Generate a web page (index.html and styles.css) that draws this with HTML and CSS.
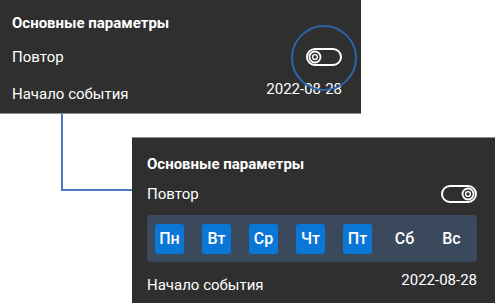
FILE: index.html
```html
<!DOCTYPE html>
<html>
<head>
    <title>Повтор события</title>
    <link rel="stylesheet" href="styles.css">
</head>
<body>
    <div class="panel panel_small">
        <p class="titre">Основные параметры</p>
        <div class="ligne ligne_toggle">
            <span>Повтор</span>
            <span class="toggle_wrap">
                <svg class="toggle" viewBox="0 0 36 18" width="36" height="18">
                    <rect x="1" y="1" width="34" height="16" rx="8" fill="none" stroke="#fff" stroke-width="2"/>
                    <circle cx="9" cy="9" r="5.5" fill="none" stroke="#fff" stroke-width="1.8"/>
                    <circle cx="9" cy="9" r="2.4" fill="none" stroke="#fff" stroke-width="1.4"/>
                </svg>
                <span class="cercle"></span>
            </span>
        </div>
        <div class="ligne ligne_date">
            <span>Начало события</span>
            <span class="date">2022-08-28</span>
        </div>
    </div>

    <!-- trait de liaison -->
    <svg class="liaison" width="140" height="200" viewBox="0 0 140 200">
        <polyline points="62,114 62,190 132,190" fill="none" stroke="#4d76c6" stroke-width="2"/>
    </svg>

    <div class="panel panel_grand">
        <p class="titre">Основные параметры</p>
        <div class="ligne ligne_toggle">
            <span>Повтор</span>
            <svg class="toggle" viewBox="0 0 36 18" width="36" height="18">
                <rect x="1" y="1" width="34" height="16" rx="8" fill="none" stroke="#fff" stroke-width="2"/>
                <circle cx="27" cy="9" r="5.5" fill="none" stroke="#fff" stroke-width="1.8"/>
                <circle cx="27" cy="9" r="2.4" fill="none" stroke="#fff" stroke-width="1.4"/>
            </svg>
        </div>
        <div class="jours">
            <span class="jour actif">Пн</span>
            <span class="jour actif">Вт</span>
            <span class="jour actif">Ср</span>
            <span class="jour actif">Чт</span>
            <span class="jour actif">Пт</span>
            <span class="jour">Сб</span>
            <span class="jour">Вс</span>
        </div>
        <div class="ligne ligne_date">
            <span>Начало события</span>
            <span class="date">2022-08-28</span>
        </div>
    </div>
</body>
</html>
```

FILE: styles.css
```css
body {
    margin: 0;
    background-color: #fff;
    font-family: Roboto, "Noto Sans", sans-serif;
    font-size: 15px;
    color: #fff;
    position: relative;
    height: 303px;
    overflow: hidden;
}
.panel {
    background-color: #2f2f2f;
    box-sizing: border-box;
}
.panel_small {
    width: 361px;
    height: 114px;
    padding: 13px 19px 0 12px;
    border-bottom: 1px solid #8a8a8a;
}
.panel_grand {
    width: 363px;
    height: 166px;
    margin-left: 132px;
    margin-top: 23px;
    padding: 16px 18px 0 15px;
    border-top: 1px solid #8a8a8a;
}
.titre {
    margin: 0;
    font-weight: bold;
    font-size: 15px;
    line-height: 20px;
}
.ligne {
    display: flex;
    justify-content: space-between;
    align-items: center;
    line-height: 20px;
}
.panel_small .ligne_toggle {
    height: 30px;
    margin-top: 9px;
}
.panel_small .ligne_date {
    height: 30px;
    margin-top: 7px;
}
.panel_grand .ligne_toggle {
    height: 26px;
    margin-top: 7px;
}
.ligne_date .date {
    margin-bottom: 10px;
}
.toggle {
    display: block;
}
.toggle_wrap {
    position: relative;
    display: block;
}
.cercle {
    position: absolute;
    left: -15px;
    top: -23px;
    width: 62px;
    height: 62px;
    border: 2px solid #2a66ae;
    border-radius: 50%;
}
.jours {
    display: flex;
    gap: 18px;
    margin-top: 8px;
    padding: 9px 10px 8px 8px;
    background-color: #3a4a5c;
    border-radius: 4px;
}
.jour {
    width: 29px;
    height: 30px;
    line-height: 30px;
    font-size: 16px;
    font-weight: 500;
    text-align: center;
    border-radius: 3px;
}
.actif {
    background-color: #0a76d6;
}
.panel_grand .ligne_date {
    height: 30px;
    margin-top: 8px;
}
.liaison {
    position: absolute;
    left: 0;
    top: 0;
}
```
